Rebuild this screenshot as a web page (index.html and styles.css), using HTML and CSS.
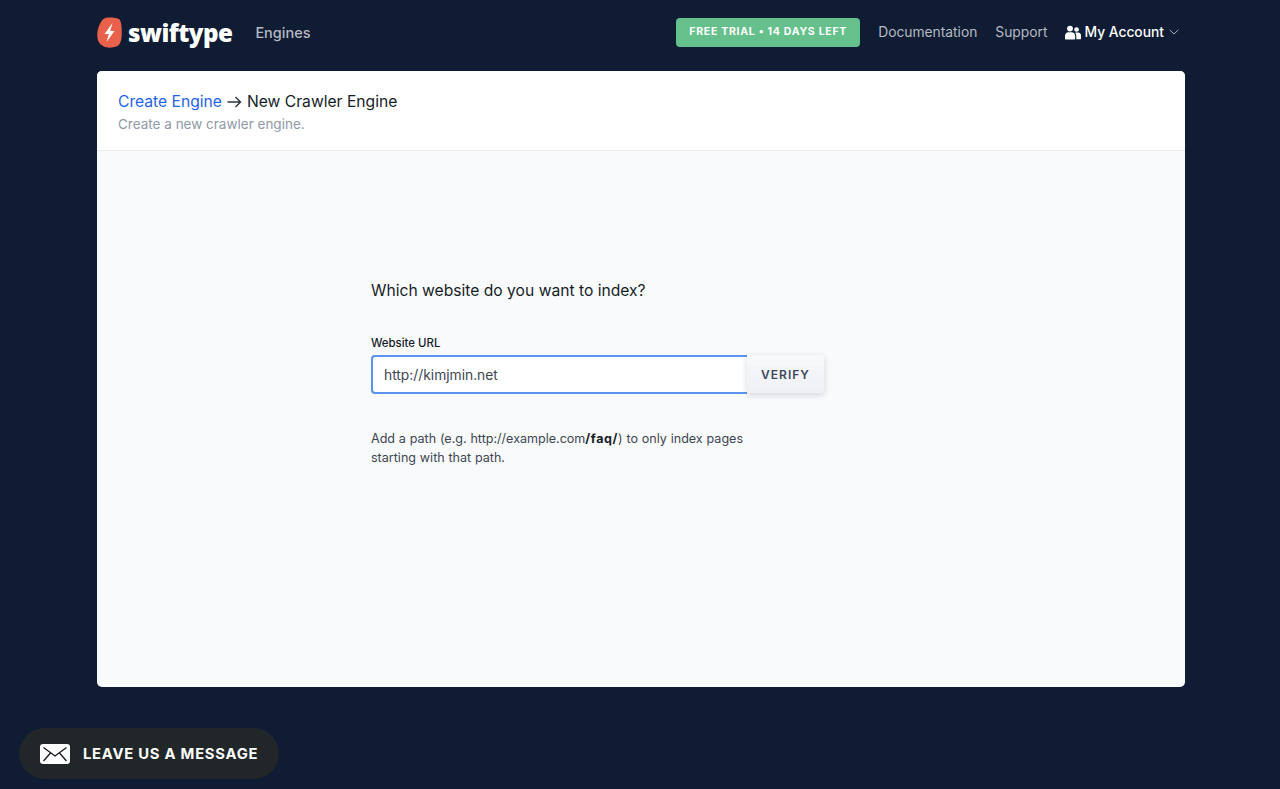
FILE: index.html
```html
<!DOCTYPE html>
<html lang="en">
<head>
<meta charset="utf-8">
<title>New Crawler Engine</title>
<link rel="stylesheet" href="styles.css">
</head>
<body>
<header class="topbar">
  <div class="nav-left">
    <a class="logo">
      <svg class="logo-mark" width="25" height="31" viewBox="0 0 25 31"><path d="M9 .8C12-.1 20 .6 22 2c2 1.500 2.800 7 2.800 13s-.8 11-3 13c-2.200 2-8 3-11.300 2.600C7 30.200 3.500 28 2 25.500.5 23 0 19 .4 15.500.8 12 2 8 4 5 5.200 3 6.800 1.500 9 .8Z" fill="#e9614a"/><path d="M15.500 6 7.500 17h4.300l-2.300 8 8-11h-4.300l2.300-8Z" fill="#fff"/></svg>
      <span class="logo-text">swiftype</span>
    </a>
    <a class="nav-engines">Engines</a>
  </div>
  <nav class="nav-right">
    <a class="trial">FREE TRIAL • 14 DAYS LEFT</a>
    <a class="nav-link">Documentation</a>
    <a class="nav-link">Support</a>
    <a class="account">
      <svg width="16" height="15" viewBox="0 0 17 15"><circle cx="5.300" cy="3.300" r="3.100" fill="#fff"/><circle cx="12.300" cy="4.300" r="2.500" fill="#fff"/><path d="M0 14.200V11c0-2.400 1.800-3.800 3.500-3.800h3.600c2 0 3.700 1.500 3.700 3.800v3.200c0 .4-.3.700-.7.700H.7c-.4 0-.7-.3-.7-.7Z" fill="#fff"/><path d="M11.700 14.900c.2-.2.300-.5.300-.8V11c0-1.200-.4-2.300-1.200-3.200.5-.2 1-.3 1.600-.3h1.500c1.700 0 3.100 1.400 3.100 3.100v3.200c0 .6-.5 1-1 1h-4.300Z" fill="#fff"/></svg>
      <span>My Account</span>
      <svg class="chev" width="10" height="6" viewBox="0 0 10 6"><path d="M.7.9 5 5 9.300.9" fill="none" stroke="#a9aeb8" stroke-width="1"/></svg>
    </a>
  </nav>
</header>
<main class="card">
  <section class="card-head">
    <h1 class="crumbs"><a class="crumb-link">Create Engine</a><svg class="arrow" width="15" height="12" viewBox="0 0 15 12"><path d="M.5 6h13M8.500 1l5 5-5 5" fill="none" stroke="#2b3440" stroke-width="1.400"/></svg><span>New Crawler Engine</span></h1>
    <p class="subtitle">Create a new crawler engine.</p>
  </section>
  <section class="card-body">
    <form class="form">
      <h2 class="question">Which website do you want to index?</h2>
      <label class="label">Website URL</label>
      <div class="url-row">
        <div class="url-input">http://kimjmin.net</div>
        <button class="verify" type="button">VERIFY</button>
      </div>
      <p class="hint">Add a path (e.g. http://example.com<b>/faq/</b>) to only index pages starting with that path.</p>
    </form>
  </section>
</main>
<a class="message">
  <svg width="30" height="20" viewBox="0 0 30 20"><rect width="30" height="20" rx="3" fill="#fff"/><path d="M3.500 3.500 15 12 26.500 3.500M3.500 17 10.500 9M26.500 17 19.500 9" fill="none" stroke="#14181c" stroke-width="1.300"/></svg>
  <span>LEAVE US A MESSAGE</span>
</a>
</body>
</html>
```
FILE: styles.css
```css
* { box-sizing: border-box; }
html, body { height: 100%; }
body {
  margin: 0;
  background: #0f1c33;
  font-family: Inter, "Noto Sans", sans-serif;
  color: #161d27;
  overflow: hidden;
  position: relative;
}
.topbar {
  height: 71px;
  padding: 0 101px 7px 97px;
  display: flex;
  align-items: center;
  justify-content: space-between;
}
.nav-left, .nav-right, .account, .logo { display: flex; align-items: center; }
.logo { gap: 6px; }
.logo-mark { flex: none; }
.logo-text {
  font-family: "Open Sans", sans-serif;
  font-weight: 800;
  font-size: 24.200px;
  letter-spacing: -0.55px;
  color: #fff;
}
.nav-engines {
  margin-left: 23px;
  font-size: 14.500px;
  font-weight: 500;
  color: #b6bac3;
}
.trial {
  width: 184px;
  height: 29px;
  margin-right: 18px;
  display: flex;
  align-items: center;
  justify-content: center;
  background: #66c08b;
  border-radius: 4px;
  color: #fff;
  font-size: 10.500px;
  font-weight: 700;
  letter-spacing: 0.72px;
  padding-bottom: 2px;
}
.nav-link {
  margin-right: 18px;
  font-size: 13.800px;
  color: #b6bac3;
}
.account { gap: 4px; color: #fff; font-size: 13.800px; font-weight: 500; }
.account span { margin-left: -1px; }
.chev { margin-left: 1px; }
.card {
  width: 1088px;
  height: 616px;
  margin-left: 97px;
  background: #f9fafc;
  border-radius: 5px;
  overflow: hidden;
  display: flex;
  flex-direction: column;
}
.card-head {
  height: 80px;
  padding: 20px 21px 0;
  background: #fff;
  border-bottom: 1px solid #e9ecf0;
}
.crumbs {
  margin: 0;
  font-size: 15.650px;
  line-height: 22px;
  font-weight: 400;
  display: flex;
  align-items: center;
  gap: 5px;
}
.crumb-link { color: #2563e6; }
.arrow { flex: none; }
.subtitle {
  margin: 1px 0 0;
  font-size: 13.500px;
  line-height: 20px;
  color: #9099a8;
}
.card-body { flex: 1; padding: 129px 0 0 274px; }
.form { width: 453px; }
.question {
  margin: 0;
  font-size: 15.650px;
  line-height: 22px;
  font-weight: 400;
  color: #161d27;
}
.label {
  display: block;
  margin-top: 33px;
  font-size: 11.400px;
  line-height: 16px;
  font-weight: 500;
}
.url-row { display: flex; margin-top: 4px; height: 39px; }
.url-input {
  width: 376px;
  padding: 1px 0 0 11px;
  display: flex;
  align-items: center;
  background: #fff;
  border: 2px solid #5a94ee;
  border-right: 0;
  border-radius: 4px 0 0 4px;
  font-size: 13.800px;
  color: #3d4551;
}
.verify {
  width: 77px;
  height: 38px;
  border: 0;
  border-radius: 0 4px 4px 0;
  background: linear-gradient(#f8f9fb, #eef0f4);
  box-shadow: 0 2px 6px rgba(30, 40, 60, 0.18);
  font-family: inherit;
  font-size: 12px;
  font-weight: 600;
  letter-spacing: 1px;
  color: #3c475a;
}
.hint {
  width: 385px;
  margin: 35px 0 0;
  font-size: 12.550px;
  word-spacing: 0.3px;
  line-height: 19px;
  color: #3d4551;
}
.hint b { font-weight: 700; color: #161d27; letter-spacing: 0.6px; }
.message {
  position: absolute;
  left: 19px;
  bottom: 10px;
  width: 260px;
  height: 51px;
  display: flex;
  align-items: center;
  gap: 13px;
  padding-left: 21px;
  background: #212629;
  border-radius: 26px;
  color: #fff;
  font-size: 14.800px;
  font-weight: 700;
  letter-spacing: 0.75px;
}
```
